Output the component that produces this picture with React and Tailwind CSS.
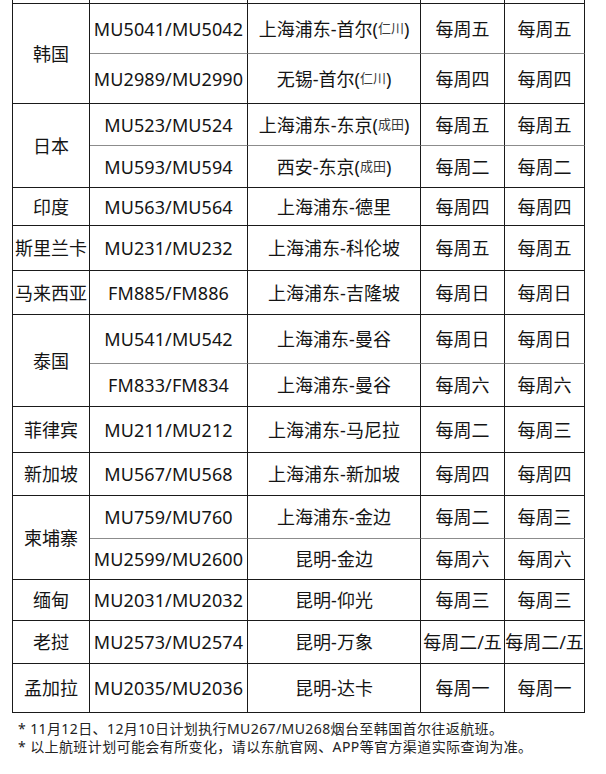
import React from "react";

const groups = [
  { c: "韩国", h: "h-[100px]", rows: [
    { h: "h-[50px]", f: "MU5041/MU5042", r: "上海浦东-首尔", s: "仁川", a: "每周五", b: "每周五" },
    { h: "h-[50px]", f: "MU2989/MU2990", r: "无锡-首尔", s: "仁川", a: "每周四", b: "每周四" },
  ]},
  { c: "日本", h: "h-[84px]", rows: [
    { h: "h-[42px]", f: "MU523/MU524", r: "上海浦东-东京", s: "成田", a: "每周五", b: "每周五" },
    { h: "h-[42px]", f: "MU593/MU594", r: "西安-东京", s: "成田", a: "每周二", b: "每周二" },
  ]},
  { c: "印度", h: "h-[38px]", rows: [
    { h: "h-[38px]", f: "MU563/MU564", r: "上海浦东-德里", a: "每周四", b: "每周四" },
  ]},
  { c: "斯里兰卡", h: "h-[45px]", rows: [
    { h: "h-[45px]", f: "MU231/MU232", r: "上海浦东-科伦坡", a: "每周五", b: "每周五" },
  ]},
  { c: "马来西亚", h: "h-[44px]", rows: [
    { h: "h-[44px]", f: "FM885/FM886", r: "上海浦东-吉隆坡", a: "每周日", b: "每周日" },
  ]},
  { c: "泰国", h: "h-[92px]", rows: [
    { h: "h-[49px]", f: "MU541/MU542", r: "上海浦东-曼谷", a: "每周日", b: "每周日" },
    { h: "h-[43px]", f: "FM833/FM834", r: "上海浦东-曼谷", a: "每周六", b: "每周六" },
  ]},
  { c: "菲律宾", h: "h-[46px]", rows: [
    { h: "h-[46px]", f: "MU211/MU212", r: "上海浦东-马尼拉", a: "每周二", b: "每周三" },
  ]},
  { c: "新加坡", h: "h-[43px]", rows: [
    { h: "h-[43px]", f: "MU567/MU568", r: "上海浦东-新加坡", a: "每周四", b: "每周四" },
  ]},
  { c: "柬埔寨", h: "h-[84px]", rows: [
    { h: "h-[43px]", f: "MU759/MU760", r: "上海浦东-金边", a: "每周二", b: "每周三" },
    { h: "h-[41px]", f: "MU2599/MU2600", r: "昆明-金边", a: "每周六", b: "每周六" },
  ]},
  { c: "缅甸", h: "h-[41px]", rows: [
    { h: "h-[41px]", f: "MU2031/MU2032", r: "昆明-仰光", a: "每周三", b: "每周三" },
  ]},
  { c: "老挝", h: "h-[43px]", rows: [
    { h: "h-[43px]", f: "MU2573/MU2574", r: "昆明-万象", a: "每周二/五", b: "每周二/五" },
  ]},
  { c: "孟加拉", h: "h-[49px]", rows: [
    { h: "h-[49px]", f: "MU2035/MU2036", r: "昆明-达卡", a: "每周一", b: "每周一" },
  ]},
];

const cell = "flex items-center justify-center whitespace-nowrap border-r border-[#1a1a1a]";

function Row({ row, last }) {
  const bb = last ? "border-b border-b-[#1a1a1a]" : "border-b border-b-[#8c8c8c]";
  return (
    <div className={`flex ${row.h}`}>
      <div className={`${cell} ${bb} w-[158px] tracking-[0.1px]`}>{row.f}</div>
      <div className={`${cell} ${bb} w-[173px]`}>
        <span>{row.r}</span>
        {row.s && (
          <span className="flex items-center">
            <span>(</span>
            <span className="text-[13px] text-[#3a3a3a]">{row.s}</span>
            <span>)</span>
          </span>
        )}
      </div>
      <div className={`${cell} ${bb} w-[84px]`}>{row.a}</div>
      <div className={`${cell} ${bb} w-[80px]`}>{row.b}</div>
    </div>
  );
}

export default function App() {
  return (
    <div
      className="w-[606px] h-[774px] bg-white text-[#141414] pl-[12px]"
      style={{ fontFamily: '"Noto Sans", "Noto Sans CJK SC", sans-serif' }}
    >
      <div className="w-[573px] border-l border-[#1a1a1a] text-[18px] leading-none">
        <div className="flex h-[4px] border-b border-[#1a1a1a]">
          <div className="w-[77px] border-r border-[#1a1a1a]" />
          <div className="w-[158px] border-r border-[#1a1a1a]" />
          <div className="w-[173px] border-r border-[#1a1a1a]" />
          <div className="w-[84px] border-r border-[#1a1a1a]" />
          <div className="w-[80px] border-r border-[#1a1a1a]" />
        </div>
        {groups.map((g) => (
          <div key={g.c} className={`flex ${g.h}`}>
            <div className={`${cell} border-b border-b-[#1a1a1a] w-[77px]`}>{g.c}</div>
            <div className="flex flex-col">
              {g.rows.map((row, i) => (
                <Row key={row.f} row={row} last={i === g.rows.length - 1} />
              ))}
            </div>
          </div>
        ))}
      </div>
      <div className="pt-[7px] pl-[6px] text-[14px] leading-[18px] tracking-[0.4px] text-[#222]">
        <div>* 11月12日、12月10日计划执行MU267/MU268烟台至韩国首尔往返航班。</div>
        <div>* 以上航班计划可能会有所变化，请以东航官网、APP等官方渠道实际查询为准。</div>
      </div>
    </div>
  );
}
